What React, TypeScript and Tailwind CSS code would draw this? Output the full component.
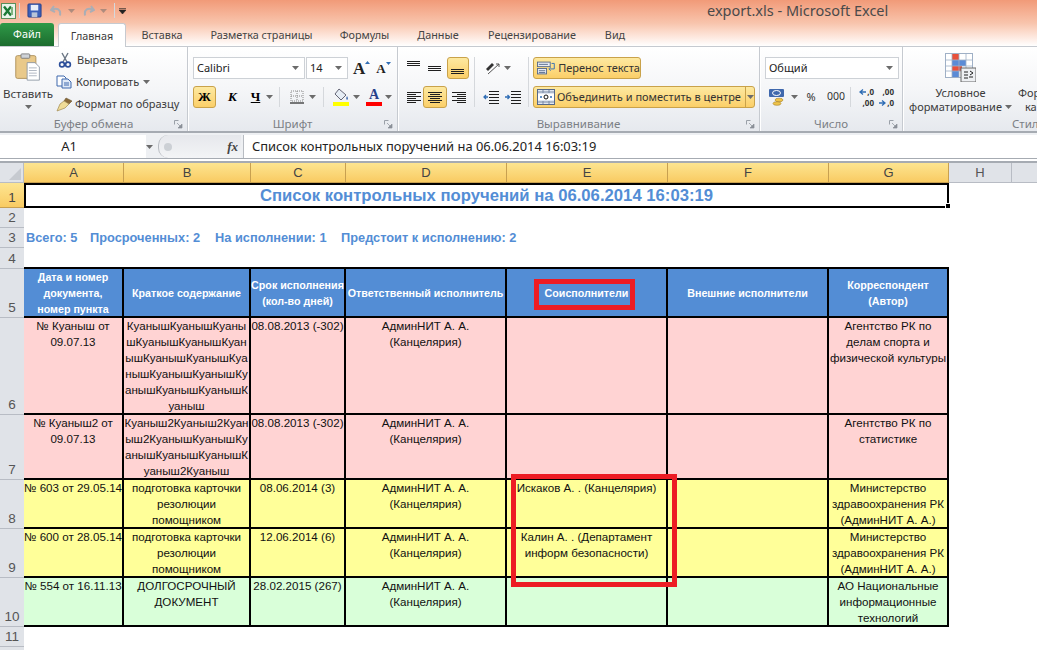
import type { ReactNode } from "react";

const ui = "font-['Noto_Sans',sans-serif] text-[11px] text-[#3b3b3b]";
const cellFont = "font-['Liberation_Sans',sans-serif] text-[11.6px] leading-[16px]";
const headFont = "font-['Liberation_Sans',sans-serif] text-[10.7px] leading-[16px]";
const activeBtn = "bg-gradient-to-b from-[#fde9a0] to-[#fbcf68] border border-[#c9a24a] rounded-[3px]";

const Arrow = ({ className = "" }: { className?: string }) => (
  <svg width="7" height="4" viewBox="0 0 7 4" className={className}>
    <path d="M0 0h7L3.5 4z" fill="#6b6b6b" />
  </svg>
);

const Launcher = () => (
  <svg width="9" height="9" viewBox="0 0 9 9">
    <path d="M.5.5h4M.5.5v4" stroke="#9aa0a8" fill="none" />
    <path d="M3 3l4 4M8 4v4H4z" stroke="#8a9098" fill="#8a9098" strokeWidth=".7" />
  </svg>
);

// horizontal text-lines icon used by the alignment buttons
const Lines = ({ rows }: { rows: [number, number, number][] }) => (
  <svg width="16" height="16" viewBox="0 0 16 16">
    {rows.map(([y, x1, x2]) => (
      <path key={`${y}-${x1}`} d={`M${x1} ${y}.5H${x2}`} stroke="#1f1f1f" />
    ))}
  </svg>
);

const Group = ({
  width,
  label,
  launcher = true,
  children,
}: {
  width: string;
  label: string;
  launcher?: boolean;
  children: ReactNode;
}) => (
  <div className={`${width} shrink-0 flex flex-col border-r border-[#c6cad0] shadow-[1px_0_0_#fff]`}>
    <div className="flex-1 min-h-0">{children}</div>
    <div className="h-[14px] relative flex items-center justify-center text-[#7b7f85] text-[11.5px] leading-[14px]">
      {label}
      {launcher && (
        <span className="absolute right-[4px] top-[3px] flex">
          <Launcher />
        </span>
      )}
    </div>
  </div>
);

const Sep = ({ className = "" }: { className?: string }) => <div className={`w-px bg-[#d5d8dc] ${className}`} />;

const Select = ({ className, text }: { className: string; text: string }) => (
  <div className={`${className} h-[22px] bg-white border border-[#cdd1d6] flex items-center justify-between pl-[3px] pr-[5px] text-[#222]`}>
    <span>{text}</span>
    <Arrow />
  </div>
);

const ExcelLogo = () => (
  <svg width="15" height="16" viewBox="0 0 15 16">
    <rect x=".5" y=".5" width="14" height="15" fill="#eaf4ea" stroke="#5a8f5a" />
    <path d="M3 3.5l7 9M10 3.5l-7 9" stroke="#1d7a36" strokeWidth="2.4" />
    <path d="M11 4v8" stroke="#7fb37f" strokeWidth="2" />
  </svg>
);

const Floppy = () => (
  <svg width="15" height="15" viewBox="0 0 16 16">
    <rect x="1" y="1" width="14" height="14" rx="1" fill="#3c5fb8" stroke="#24408a" />
    <rect x="4" y="2" width="8" height="6" fill="#e8eef8" />
    <rect x="5" y="10" width="6" height="5" fill="#b8c4d8" />
  </svg>
);

const Undo = ({ flip = false }: { flip?: boolean }) => (
  <svg width="13" height="13" viewBox="0 0 13 13" className={flip ? "-scale-x-100" : ""}>
    <path d="M4 2L1 6l4 2M2 5.5c5-2 9-.5 8 6" fill="none" stroke="#a9aeb6" strokeWidth="2" />
  </svg>
);

const Clipboard = () => (
  <svg width="28" height="28" viewBox="0 0 30 32">
    <rect x="1" y="3" width="23" height="26" rx="2" fill="#e9c98a" stroke="#a98b55" />
    <rect x="7" y="1" width="10" height="5" rx="1" fill="#cfd3d8" stroke="#777" />
    <path d="M14 11h9l5 5v15H14z" fill="#fff" stroke="#8c96a3" />
    <path d="M16 17h9M16 20h9M16 23h9M16 26h9" stroke="#a8b0bb" />
  </svg>
);

const Scissors = () => (
  <svg width="14" height="16" viewBox="0 0 14 16">
    <path d="M10 1L5 10M4 1l5 9" stroke="#6b7684" strokeWidth="1.4" />
    <circle cx="4" cy="12.5" r="2.4" fill="none" stroke="#2b4e9a" strokeWidth="1.6" />
    <circle cx="10" cy="12.5" r="2.4" fill="none" stroke="#2b4e9a" strokeWidth="1.6" />
  </svg>
);

const CopyIcon = () => (
  <svg width="16" height="14" viewBox="0 0 16 14">
    <path d="M1 1h7l2 2v8H1z" fill="#fff" stroke="#3f68ad" />
    <path d="M6 4h6l3 3v6H6z" fill="#dfe9f7" stroke="#3f68ad" />
    <path d="M8 8h5M8 10h5" stroke="#3f68ad" />
  </svg>
);

const Brush = () => (
  <svg width="17" height="15" viewBox="0 0 17 15">
    <path d="M10 1l6 3-3 3-5-3z" fill="#8a6a3a" stroke="#6b5530" strokeWidth=".6" />
    <path d="M8 4l5 3-4 4-8 3 3-7z" fill="#f0dc98" stroke="#a08a50" strokeWidth=".7" />
  </svg>
);

const FillIcon = () => (
  <svg width="16" height="18" viewBox="0 0 16 18">
    <path d="M6 1l7 6-5 5-6-6z" fill="#e6edf5" stroke="#556" strokeWidth=".9" />
    <path d="M14 8c1 2 1.500 3 0 4-1-1-1-2 0-4z" fill="#3f68ad" />
    <rect x="0" y="14" width="16" height="4" fill="#ffff00" />
  </svg>
);

const BordersIcon = () => (
  <svg width="14" height="14" viewBox="0 0 14 14">
    <path d="M1 1h12v10H1zM7 1v10M1 6h12" fill="none" stroke="#888" strokeDasharray="1 1" />
    <path d="M0 13h14" stroke="#222" strokeWidth="1.2" />
  </svg>
);

const WrapIcon = () => (
  <svg width="20" height="16" viewBox="0 0 20 16">
    <rect x=".5" y="1.500" width="14" height="5" fill="#e8edf5" stroke="#55688a" />
    <rect x=".5" y="8.500" width="10" height="6" fill="#e8edf5" stroke="#55688a" />
    <path d="M2 4h10M2 11h7M2 13h7" stroke="#55688a" />
    <path d="M16 3h3v6h-5M15 7l-2 2 2 2" fill="none" stroke="#2f6db5" />
  </svg>
);

const MergeIcon = () => (
  <svg width="18" height="16" viewBox="0 0 18 16">
    <rect x=".5" y=".5" width="17" height="15" fill="#dfe6f0" stroke="#55688a" />
    <rect x="1" y="5" width="16" height="6" fill="#fff" />
    <path d="M3 8h2M13 8h2" stroke="#2f6db5" strokeWidth="1.500" />
    <path d="M1 3h16M1 13h16M6 1v3M12 1v3M6 12v3M12 12v3" stroke="#7a8aa5" />
    <circle cx="9" cy="8" r="2" fill="none" stroke="#111" />
  </svg>
);

const IndentIcon = ({ flip = false }: { flip?: boolean }) => (
  <svg width="16" height="14" viewBox="0 0 16 14">
    <path d="M6 1.500h10M6 4.500h10M6 7.500h10M6 10.500h10M6 13.500h10" stroke="#1f1f1f" />
    {flip ? (
      <path d="M0 7h4M2.500 5l2 2-2 2" stroke="#2f6db5" fill="none" strokeWidth="1.300" />
    ) : (
      <path d="M5 7H1M3 5L1 7l2 2" stroke="#2f6db5" fill="none" strokeWidth="1.300" />
    )}
  </svg>
);

const Orient = () => (
  <svg width="17" height="15" viewBox="0 0 17 15">
    <path d="M2 8l6-6 2 2-6 6z" fill="#333" />
    <path d="M4 13L15 3M15 3h-3M15 3v3" stroke="#555" fill="none" />
  </svg>
);

const Currency = () => (
  <svg width="16" height="17" viewBox="0 0 16 17">
    <rect x="0" y="0" width="15" height="8" rx="1" fill="#3f68ad" />
    <ellipse cx="7.500" cy="4" rx="4" ry="2.500" fill="none" stroke="#fff" />
    <ellipse cx="10" cy="11" rx="4" ry="1.800" fill="#efc44a" stroke="#a4802a" strokeWidth=".6" />
    <ellipse cx="8" cy="14.500" rx="4" ry="1.800" fill="#efc44a" stroke="#a4802a" strokeWidth=".6" />
  </svg>
);

const Decimal = ({ flip = false }: { flip?: boolean }) => (
  <div className="w-[19px] text-[8px] font-bold leading-[11px] text-[#333] text-right">
    <div className="flex items-center justify-end gap-[1px]">
      {!flip && (
        <svg width="7" height="6" viewBox="0 0 7 6">
          <path d="M7 3H2M4 .5L1 3l3 2.500" stroke="#2f6db5" fill="none" strokeWidth="1.300" />
        </svg>
      )}
      <span>{flip ? ",00" : ",0"}</span>
    </div>
    <div className="flex items-center justify-end gap-[1px]">
      {flip && (
        <svg width="7" height="6" viewBox="0 0 7 6">
          <path d="M0 3h5M3 .5L6 3 3 5.500" stroke="#2f6db5" fill="none" strokeWidth="1.300" />
        </svg>
      )}
      <span>{flip ? ",0" : ",00"}</span>
    </div>
  </div>
);

const CondFormat = () => (
  <svg width="31" height="29" viewBox="0 0 31 29">
    <rect x=".5" y=".5" width="27" height="24" fill="#fff" stroke="#9fb0c6" />
    <rect x="7" y="1" width="7" height="7" fill="#e8503a" />
    <rect x="7" y="7" width="14" height="6" fill="#5b8bd6" />
    <rect x="7" y="13" width="10" height="5" fill="#e8503a" />
    <rect x="7" y="18" width="7" height="6" fill="#5b8bd6" />
    <path d="M7 0v25M14 0v25M21 0v25M0 7h28M0 13h28M0 18h28" stroke="#9fb0c6" strokeWidth=".8" fill="none" />
    <rect x="16" y="15" width="15" height="14" fill="#eef0f3" stroke="#666" />
    <path d="M19 19h4M19 22h4M19 25h4M25 18l3 2-3 2M28 24h-4" stroke="#222" fill="none" />
  </svg>
);

const TitleBar = () => (
  <div className="h-[46px] bg-gradient-to-b from-[#f19a78] via-[#f8c4ac] to-[#ffffff] relative">
    <div className="h-[21px] flex items-center">
      <span className="ml-[1px] flex">
        <ExcelLogo />
      </span>
      <Sep className="h-[15px] ml-[3px] bg-[#b98a78]" />
      <span className="ml-[7px] flex">
        <Floppy />
      </span>
      <span className="ml-[8px] flex">
        <Undo />
      </span>
      <Arrow className="ml-[5px] opacity-50" />
      <span className="ml-[7px] flex">
        <Undo flip />
      </span>
      <Arrow className="ml-[5px] opacity-50" />
      <Sep className="h-[15px] ml-[7px] bg-[#8a6a5c]" />
      <svg width="7" height="6" viewBox="0 0 7 6" className="ml-[4px]">
        <path d="M0 .5h7M0 2h7l-3.500 4z" stroke="#222" fill="#222" strokeWidth=".6" />
      </svg>
      <span className="ml-[581px] font-['Noto_Sans',sans-serif] text-[14.5px] text-[#4a4a4a] whitespace-nowrap">
        export.xls - Microsoft Excel
      </span>
    </div>
    <div className="h-[25px] flex items-end text-[10.8px]">
      <div className="w-[54px] h-[23px] rounded-t-[3px] bg-gradient-to-b from-[#2f9a48] to-[#1c6c2e] text-white text-center leading-[22px]">
        Файл
      </div>
      <div className="ml-[4px] w-[68px] h-[24px] rounded-t-[3px] bg-white border border-b-0 border-[#c6cad0] text-center leading-[23px] relative top-px z-10">
        Главная
      </div>
      <div className="flex h-[23px] leading-[23px] text-center text-[#444] whitespace-nowrap">
        <span className="w-[72px]">Вставка</span>
        <span className="w-[127px]">Разметка страницы</span>
        <span className="w-[79px]">Формулы</span>
        <span className="w-[68px]">Данные</span>
        <span className="w-[120px]">Рецензирование</span>
        <span className="w-[46px]">Вид</span>
      </div>
    </div>
  </div>
);

const Ribbon = () => (
  <div className="h-[87px] flex border-t border-[#c6cad0] border-b-2 border-b-[#a6abb2] bg-gradient-to-b from-[#ffffff] via-[#f5f6f8] to-[#e6e9ee] overflow-hidden">
    <Group width="w-[188px]" label="Буфер обмена">
      <div className="flex h-full">
        <div className="w-[56px] flex flex-col items-center pt-[6px]">
          <Clipboard />
          <span className="mt-[5px] leading-[16px] text-[11.5px]">Вставить</span>
          <Arrow className="mt-[3px]" />
        </div>
        <div className="pt-[2px] flex flex-col">
          <div className="h-[22px] flex items-center gap-[5px] pl-[2px]">
            <Scissors />
            <span>Вырезать</span>
          </div>
          <div className="h-[22px] flex items-center gap-[4px]">
            <CopyIcon />
            <span>Копировать</span>
            <Arrow />
          </div>
          <div className="h-[22px] flex items-center gap-[2px] whitespace-nowrap">
            <Brush />
            <span>Формат по образцу</span>
          </div>
        </div>
      </div>
    </Group>

    <Group width="w-[210px]" label="Шрифт">
      <div className="pl-[5px] pt-[10px]">
        <div className="flex items-center">
          <Select className="w-[112px]" text="Calibri" />
          <Select className="w-[42px] ml-[1px]" text="14" />
          <span className="ml-[5px] relative font-['Liberation_Serif',serif] font-bold text-[17px] leading-none text-[#222]">
            A
            <svg width="5" height="3" viewBox="0 0 5 3" className="absolute -right-[5px] top-[1px]">
              <path d="M0 3h5L2.500 0z" fill="#2f6db5" />
            </svg>
          </span>
          <span className="ml-[11px] relative font-['Liberation_Serif',serif] font-bold text-[13px] leading-none text-[#222]">
            A
            <svg width="5" height="3" viewBox="0 0 5 3" className="absolute -right-[5px] top-[0px]">
              <path d="M0 0h5L2.500 3z" fill="#2f6db5" />
            </svg>
          </span>
        </div>
        <div className="flex items-center mt-[7px] h-[22px]">
          <div className={`w-[23px] h-[22px] ${activeBtn} flex items-center justify-center font-['Liberation_Serif',serif] font-bold text-[13px] text-black`}>
            Ж
          </div>
          <span className="w-[33px] text-center font-['Liberation_Serif',serif] font-bold italic text-[13px] text-black">К</span>
          <span className="w-[13px] text-center font-['Liberation_Serif',serif] font-bold underline text-[13px] text-black">Ч</span>
          <Arrow className="ml-[4px]" />
          <Sep className="h-[20px] ml-[6px]" />
          <span className="ml-[10px] flex">
            <BordersIcon />
          </span>
          <Arrow className="ml-[5px]" />
          <Sep className="h-[20px] ml-[7px]" />
          <span className="ml-[9px] flex">
            <FillIcon />
          </span>
          <Arrow className="ml-[4px]" />
          <div className="ml-[6px] w-[16px] flex flex-col items-center leading-none">
            <span className="font-['Liberation_Serif',serif] font-bold text-[14px] text-[#26408a] leading-[14px]">A</span>
            <span className="w-[16px] h-[4px] bg-[#ff0000]" />
          </div>
          <Arrow className="ml-[3px]" />
        </div>
      </div>
    </Group>

    <Group width="w-[362px]" label="Выравнивание">
      <div className="flex pl-[8px] pt-[10px] h-full">
        <div className="w-[66px]">
          <div className="h-[22px] flex items-center">
            <span className="w-[16px] flex -translate-y-[3px]">
              <Lines rows={[[4, 1, 14], [6, 1, 14], [8, 1, 14]]} />
            </span>
            <span className="w-[25px] flex justify-center">
              <Lines rows={[[6, 1, 14], [8, 1, 14], [10, 1, 14]]} />
            </span>
            <div className={`w-[22px] h-[22px] ${activeBtn} flex items-center justify-center`}>
              <Lines rows={[[9, 1, 14], [11, 1, 14], [13, 1, 14]]} />
            </div>
          </div>
          <div className="h-[22px] mt-[7px] flex items-center">
            <span className="w-[17px] flex">
              <Lines rows={[[3, 1, 15], [5, 1, 10], [7, 1, 15], [9, 1, 10], [11, 1, 15], [13, 1, 10]]} />
            </span>
            <div className={`w-[24px] h-[22px] ${activeBtn} flex items-center justify-center`}>
              <Lines rows={[[3, 1, 15], [5, 3, 13], [7, 1, 15], [9, 3, 13], [11, 1, 15], [13, 3, 13]]} />
            </div>
            <span className="w-[16px] ml-[4px] flex">
              <Lines rows={[[3, 1, 15], [5, 6, 15], [7, 1, 15], [9, 6, 15], [11, 1, 15], [13, 6, 15]]} />
            </span>
          </div>
        </div>
        <Sep className="h-[50px] ml-[2px]" />
        <div className="w-[53px] pl-[8px]">
          <div className="h-[22px] flex items-center gap-[3px] pl-[1px]">
            <Orient />
            <Arrow />
          </div>
          <div className="h-[22px] mt-[7px] flex items-center gap-[6px]">
            <IndentIcon />
            <IndentIcon flip />
          </div>
        </div>
        <Sep className="h-[50px]" />
        <div className="pl-[4px] whitespace-nowrap">
          <div className={`w-[108px] h-[22px] ${activeBtn} flex items-center gap-[3px] pl-[3px] text-[#333]`}>
            <WrapIcon />
            <span>Перенос текста</span>
          </div>
          <div className={`w-[222px] h-[22px] mt-[7px] ${activeBtn} flex items-center pl-[3px] text-[#333]`}>
            <MergeIcon />
            <span className="ml-[2px] w-[188px] text-[11px]">Объединить и поместить в центре</span>
            <span className="h-full border-l border-[#c9a24a] flex-1 flex items-center justify-center">
              <Arrow />
            </span>
          </div>
        </div>
      </div>
    </Group>

    <Group width="w-[143px]" label="Число">
      <div className="pl-[5px] pt-[10px]">
        <Select className="w-[134px]" text="Общий" />
        <div className="flex items-center mt-[7px] h-[22px] text-[#333]">
          <span className="ml-[4px] flex">
            <Currency />
          </span>
          <Arrow className="ml-[6px]" />
          <span className="ml-[7px] w-[12px] text-center">%</span>
          <span className="ml-[10px] w-[16px] text-center text-[10.500px]">000</span>
          <Sep className="h-[20px] ml-[7px]" />
          <span className="ml-[4px] flex">
            <Decimal />
          </span>
          <span className="ml-[1px] flex">
            <Decimal flip />
          </span>
        </div>
      </div>
    </Group>

    <div className="flex-1 min-w-0 flex flex-col whitespace-nowrap">
      <div className="flex-1 flex pt-[6px]">
        <div className="w-[115px] shrink-0 flex flex-col items-center">
          <CondFormat />
          <span className="mt-[4px] leading-[14px]">Условное</span>
          <span className="leading-[14px] flex items-center gap-[3px]">
            форматирование
            <Arrow />
          </span>
        </div>
        <div className="pt-[33px] leading-[14px]">
          <div>Фор</div>
          <div className="pl-[7px]">ка</div>
        </div>
      </div>
      <div className="h-[14px] pl-[109px] text-[#7b7f85] text-[11.5px] leading-[14px]">Стил</div>
    </div>
  </div>
);

const FormulaBar = () => (
  <div className="h-[26px] flex bg-[#eef0f3] border-b border-[#a6abb2] pt-[2px]">
    <div className="w-[146px] bg-white flex items-center justify-center pr-[8px] text-[13px] text-[#222]">A1</div>
    <div className="w-[12px] flex items-center">
      <Arrow />
    </div>
    <div className="w-[83px] rounded-l-[10px] border-l border-[#b8bcc2] bg-gradient-to-b from-[#e6e8ec] to-[#f3f4f6] flex items-center justify-between pl-[5px] pr-[3px]">
      <span className="w-[8px] h-[8px] rounded-full bg-[#ccd0d5]" />
      <span className="font-['Liberation_Serif',serif] italic font-bold text-[13px] text-[#444]">fx</span>
    </div>
    <div className="ml-[2px] flex-1 bg-white border-l border-[#b8bcc2] pl-[8px] flex items-center text-[12.9px] text-[#222] whitespace-nowrap">
      Список контрольных поручений на 06.06.2014 16:03:19
    </div>
  </div>
);

const colLetters = ["A", "B", "C", "D", "E", "F", "G"];

const RowNum = ({ n, active = false }: { n?: number; active?: boolean }) => (
  <div
    className={`flex items-end justify-center border-b text-[13.5px] leading-[18px] font-['Liberation_Sans',sans-serif] ${
      active
        ? "bg-gradient-to-b from-[#fde590] to-[#f9cb62] border-[#c8a050] text-[#444]"
        : "bg-[#e0e3e8] border-[#b8bcc4] text-[#555]"
    }`}
  >
    {n}
  </div>
);

const pink = "bg-[#ffd3d3]";
const yellow = "bg-[#ffff99]";
const green = "bg-[#d9ffd9]";

const rows: { n: number; bg: string; cells: string[][] }[] = [
  {
    n: 6,
    bg: pink,
    cells: [
      ["№ Куаныш от", "09.07.13"],
      ["КуанышКуанышКуаны", "шКуанышКуанышКуан", "ышКуанышКуанышКуа", "нышКуанышКуанышКу", "анышКуанышКуанышК", "уаныш"],
      ["08.08.2013 (-302)"],
      ["АдминНИТ А. А.", "(Канцелярия)"],
      [],
      [],
      ["Агентство РК по", "делам спорта и", "физической культуры"],
    ],
  },
  {
    n: 7,
    bg: pink,
    cells: [
      ["№ Куаныш2 от", "09.07.13"],
      ["Куаныш2Куаныш2Куан", "ыш2КуанышКуанышКу", "анышКуанышКуанышК", "уаныш2Куаныш"],
      ["08.08.2013 (-302)"],
      ["АдминНИТ А. А.", "(Канцелярия)"],
      [],
      [],
      ["Агентство РК по", "статистике"],
    ],
  },
  {
    n: 8,
    bg: yellow,
    cells: [
      ["№ 603 от 29.05.14"],
      ["подготовка карточки", "резолюции", "помощником"],
      ["08.06.2014 (3)"],
      ["АдминНИТ А. А.", "(Канцелярия)"],
      ["Искаков А. . (Канцелярия)"],
      [],
      ["Министерство", "здравоохранения РК", "(АдминНИТ А. А.)"],
    ],
  },
  {
    n: 9,
    bg: yellow,
    cells: [
      ["№ 600 от 28.05.14"],
      ["подготовка карточки", "резолюции", "помощником"],
      ["12.06.2014 (6)"],
      ["АдминНИТ А. А.", "(Канцелярия)"],
      ["Калин А. . (Департамент", "информ безопасности)"],
      [],
      ["Министерство", "здравоохранения РК", "(АдминНИТ А. А.)"],
    ],
  },
  {
    n: 10,
    bg: green,
    cells: [
      ["№ 554 от 16.11.13"],
      ["ДОЛГОСРОЧНЫЙ", "ДОКУМЕНТ"],
      ["28.02.2015 (267)"],
      ["АдминНИТ А. А.", "(Канцелярия)"],
      [],
      [],
      ["АО Национальные", "информационные", "технологий"],
    ],
  },
];

const headers = [
  ["Дата и номер", "документа,", "номер пункта"],
  ["Краткое содержание"],
  ["Срок исполнения", "(кол-во дней)"],
  ["Ответственный исполнитель"],
  ["Соисполнители"],
  ["Внешние исполнители"],
  ["Корреспондент", "(Автор)"],
];

const Sheet = () => (
  <div className="relative mt-[2px] border-t-2 border-[#a6abb2] h-[490px] overflow-hidden bg-white">
    <div className="grid grid-cols-[24px_100px_127px_95px_161px_161px_161px_120px_63px_25px] grid-rows-[20px_25px_20px_20px_21px_49px_97px_65px_49px_49px_49px_20px_20px_20px]">
      {/* column headers */}
      <div className="bg-[#e0e3e8] border-b border-r border-[#b8bcc4] flex items-end justify-end p-[2px]">
        <svg width="12" height="12" viewBox="0 0 12 12">
          <path d="M12 0v12H0z" fill="#c6cad0" />
        </svg>
      </div>
      {colLetters.map((c) => (
        <div
          key={c}
          className="bg-gradient-to-b from-[#fde590] to-[#f9cb62] border-b border-r border-[#c8a050] flex items-center justify-center text-[13px] text-[#444] font-['Liberation_Sans',sans-serif]"
        >
          {c}
        </div>
      ))}
      <div className="bg-[#e0e3e8] border-b border-r border-[#b8bcc4] flex items-center justify-center text-[13px] text-[#555] font-['Liberation_Sans',sans-serif]">
        H
      </div>
      <div className="bg-[#e0e3e8] border-b border-[#b8bcc4]" />

      {/* row 1, merged title */}
      <RowNum n={1} active />
      <div className="col-span-7 relative border-2 border-black flex items-center justify-center font-['Liberation_Sans',sans-serif] font-bold text-[16.7px] text-[#538dd5] whitespace-nowrap">
        Список контрольных поручений на 06.06.2014 16:03:19
        <span className="absolute -right-[4px] -bottom-[3px] w-[6px] h-[6px] bg-black border border-white" />
      </div>
      <div className="col-span-2" />

      <RowNum n={2} />
      <div className="col-span-9" />

      {/* row 3, totals */}
      <RowNum n={3} />
      <div className="col-span-9 pl-[2px] flex items-center font-['Liberation_Sans',sans-serif] font-bold text-[12.8px] text-[#538dd5] whitespace-nowrap">
        <span className="w-[64px]">Всего: 5</span>
        <span className="w-[125px]">Просроченных: 2</span>
        <span className="w-[126px]">На исполнении: 1</span>
        <span>Предстоит к исполнению: 2</span>
      </div>

      <RowNum n={4} />
      <div className="col-span-7 border-b-2 border-black" />
      <div className="col-span-2" />

      {/* table head */}
      <RowNum n={5} />
      {headers.map((lines, i) => (
        <div
          key={i}
          className={`bg-[#538dd5] border-r-2 border-b-2 border-black flex flex-col items-center justify-center text-white font-bold whitespace-nowrap ${headFont}`}
        >
          {lines.map((l) => (
            <span key={l}>{l}</span>
          ))}
        </div>
      ))}
      <div className="col-span-2" />

      {rows.map((r) => (
        <div key={r.n} className="contents">
          <RowNum n={r.n} />
          {r.cells.map((lines, i) => (
            <div
              key={i}
              className={`${r.bg} border-r-2 border-b-2 border-black flex flex-col items-center text-[#111] whitespace-nowrap overflow-hidden ${cellFont}`}
            >
              {lines.map((l) => (
                <span key={l}>{l}</span>
              ))}
            </div>
          ))}
          <div className="col-span-2" />
        </div>
      ))}

      <RowNum n={11} />
      <div className="col-span-9" />
      <RowNum />
      <div className="col-span-9" />
    </div>

    {/* red marks drawn over the sheet */}
    <div className="absolute left-[534px] top-[116px] w-[101px] h-[31px] border-[5px] border-[#ed1c24]" />
    <div className="absolute left-[511px] top-[311px] w-[166px] h-[113px] border-[5px] border-[#ed1c24]" />
  </div>
);

export default function App() {
  return (
    <div className={`w-[1037px] h-[650px] overflow-hidden bg-white ${ui}`}>
      <TitleBar />
      <Ribbon />
      <FormulaBar />
      <Sheet />
    </div>
  );
}
